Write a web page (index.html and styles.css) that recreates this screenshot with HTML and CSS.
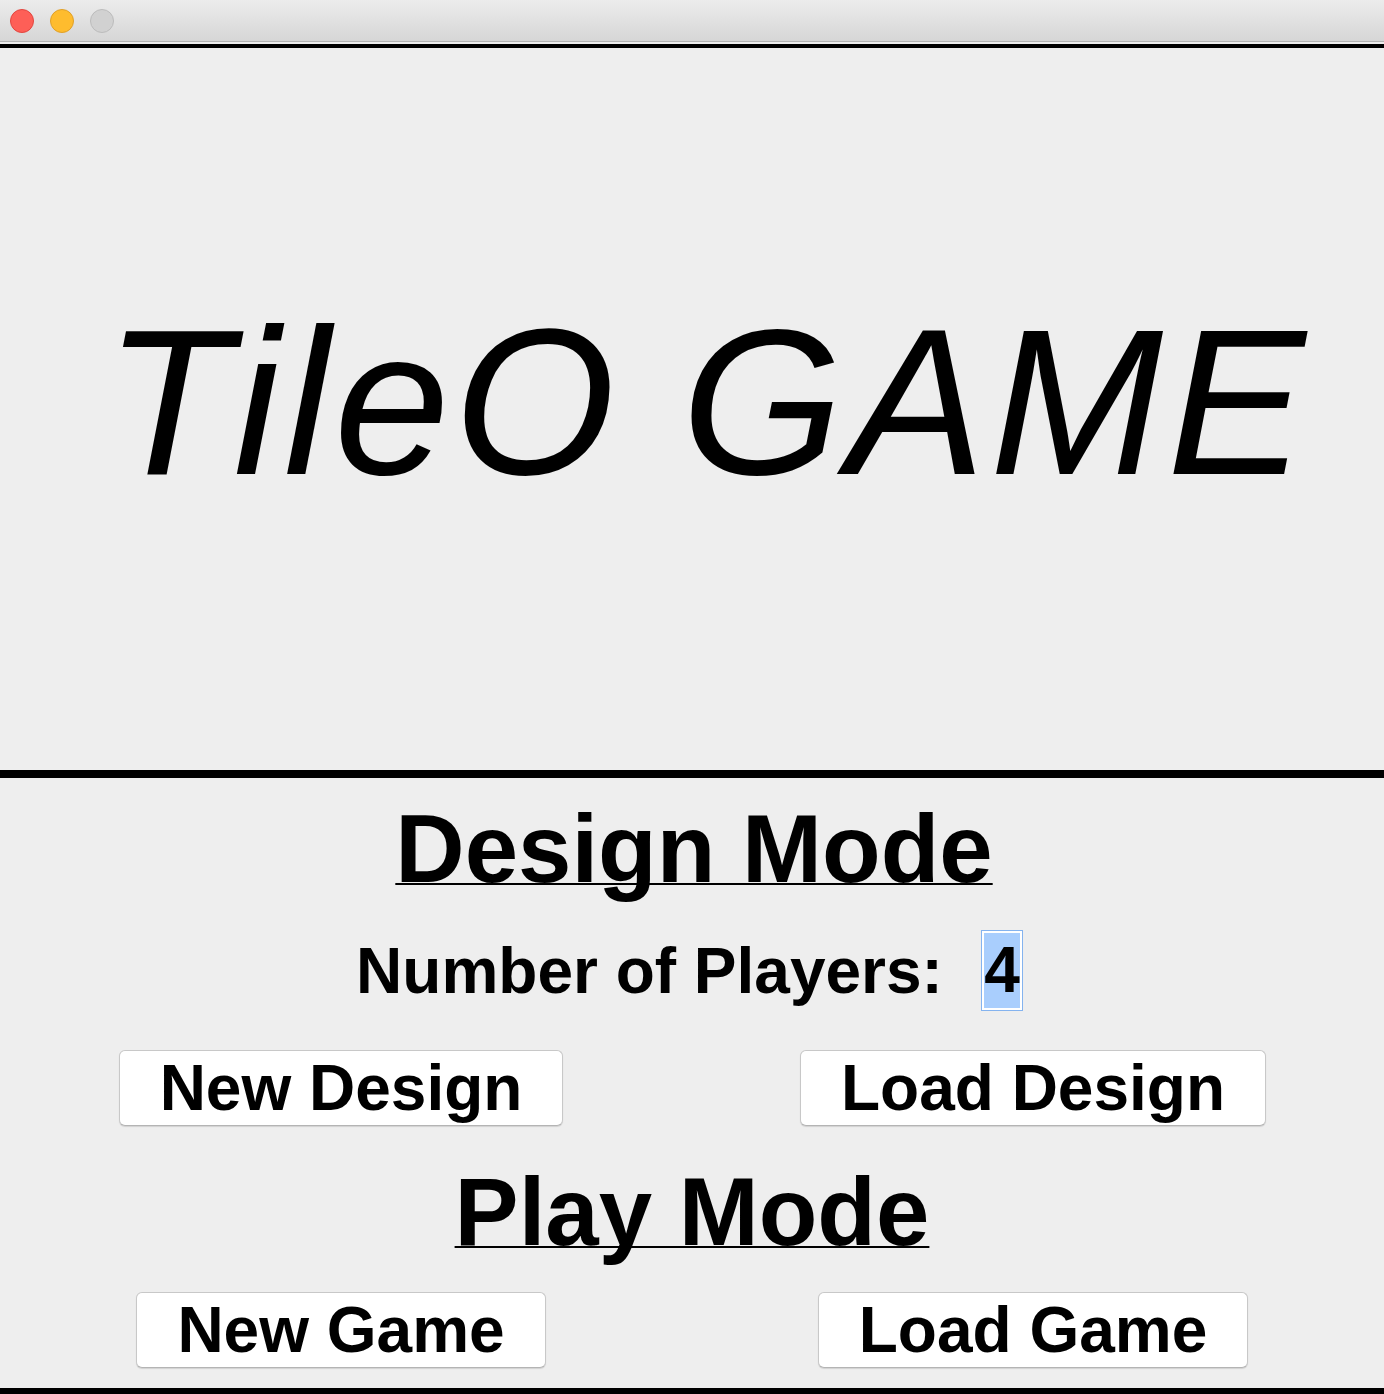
FILE: index.html
```html
<!DOCTYPE html>
<html lang="en">
<head>
<meta charset="utf-8">
<title>TileO GAME</title>
<link rel="stylesheet" href="styles.css">
</head>
<body>
<div class="window">
  <div class="titlebar">
    <span class="light light-close"></span>
    <span class="light light-min"></span>
    <span class="light light-max"></span>
  </div>
  <div class="rule rule-top"></div>
  <div class="hero">
    <h1 class="game-title">TileO GAME</h1>
  </div>
  <div class="rule rule-mid"></div>
  <div class="lower">
    <h2 class="mode-heading design-heading">Design Mode</h2>
    <div class="players-row">
      <span class="players-label">Number of Players:</span>
      <span class="num-field">4</span>
    </div>
    <div class="button-row row-design">
      <button class="btn">New Design</button>
      <button class="btn">Load Design</button>
    </div>
    <h2 class="mode-heading play-heading">Play Mode</h2>
    <div class="button-row row-play">
      <button class="btn">New Game</button>
      <button class="btn">Load Game</button>
    </div>
    <div class="rule rule-bottom"></div>
  </div>
</div>
</body>
</html>
```

FILE: styles.css
```css
html, body {
  margin: 0;
  padding: 0;
}

body {
  background: #eeeeee;
  font-family: "Liberation Sans", Arial, Helvetica, sans-serif;
  color: #000;
  overflow: hidden;
}

.window {
  display: flex;
  flex-direction: column;
  width: 1384px;
  height: 1394px;
}

.titlebar {
  height: 41px;
  border-bottom: 1px solid #b3b3b3;
  background: linear-gradient(#ececec, #d6d6d6);
  display: flex;
  align-items: center;
  gap: 16px;
  padding-left: 10px;
  box-sizing: content-box;
}

.light {
  width: 22px;
  height: 22px;
  border-radius: 50%;
  display: block;
}

.light-close {
  background: #fe5f57;
  border: 1px solid #e2463f;
}

.light-min {
  background: #febc2e;
  border: 1px solid #e0a028;
}

.light-max {
  background: #d1d1d1;
  border: 1px solid #bcbcbc;
}

.rule {
  background: #000;
  flex: none;
}

.rule-top {
  height: 4px;
  margin-top: 2px;
}

.hero {
  height: 708px;
  padding-bottom: 14px;
  display: flex;
  align-items: center;
  justify-content: center;
}

.game-title {
  margin: 0;
  font-size: 208px;
  font-weight: normal;
  font-style: italic;
  line-height: 208px;
  letter-spacing: 4px;
  white-space: nowrap;
  padding-left: 30px;
}

.rule-mid {
  height: 8px;
}

.lower {
  display: flex;
  flex-direction: column;
  align-items: stretch;
}

.mode-heading {
  margin: 0;
  text-align: center;
  font-size: 96px;
  font-weight: bold;
  line-height: 104px;
  text-decoration: underline;
  text-decoration-thickness: 2px;
  text-underline-offset: 1px;
  text-decoration-skip-ink: none;
}

.design-heading {
  margin-top: 19px;
  padding-left: 4px;
}

.play-heading {
  margin-top: 34px;
}

.players-row {
  margin-top: 29px;
  height: 81px;
  display: flex;
  align-items: center;
  justify-content: center;
  gap: 38px;
  padding-right: 5px;
}

.players-label {
  font-size: 64px;
  font-weight: bold;
  line-height: 74px;
}

.num-field {
  width: 42px;
  height: 81px;
  border: 1px solid #84b3ef;
  background: #a9cefd;
  box-shadow: inset 0 0 0 2px #ffffff;
  display: flex;
  align-items: center;
  justify-content: center;
  font-size: 64px;
  font-weight: bold;
  line-height: 74px;
  padding-bottom: 2px;
  box-sizing: border-box;
}

.button-row {
  display: grid;
  grid-template-columns: 682px 1fr;
  justify-items: center;
}

.row-design {
  margin-top: 39px;
}

.row-play {
  margin-top: 28px;
}

.btn {
  font-family: "Liberation Sans", Arial, Helvetica, sans-serif;
  font-size: 64px;
  font-weight: bold;
  line-height: 74px;
  height: 76px;
  color: #000;
  background: #ffffff;
  border: 1px solid #c8c8c8;
  border-bottom-color: #b4b4b4;
  border-radius: 6px;
  padding: 0 40px;
  margin: 0;
  box-shadow: 0 1px 1px rgba(0, 0, 0, 0.12);
  white-space: nowrap;
}

.rule-bottom {
  height: 6px;
  margin-top: 20px;
}
```
